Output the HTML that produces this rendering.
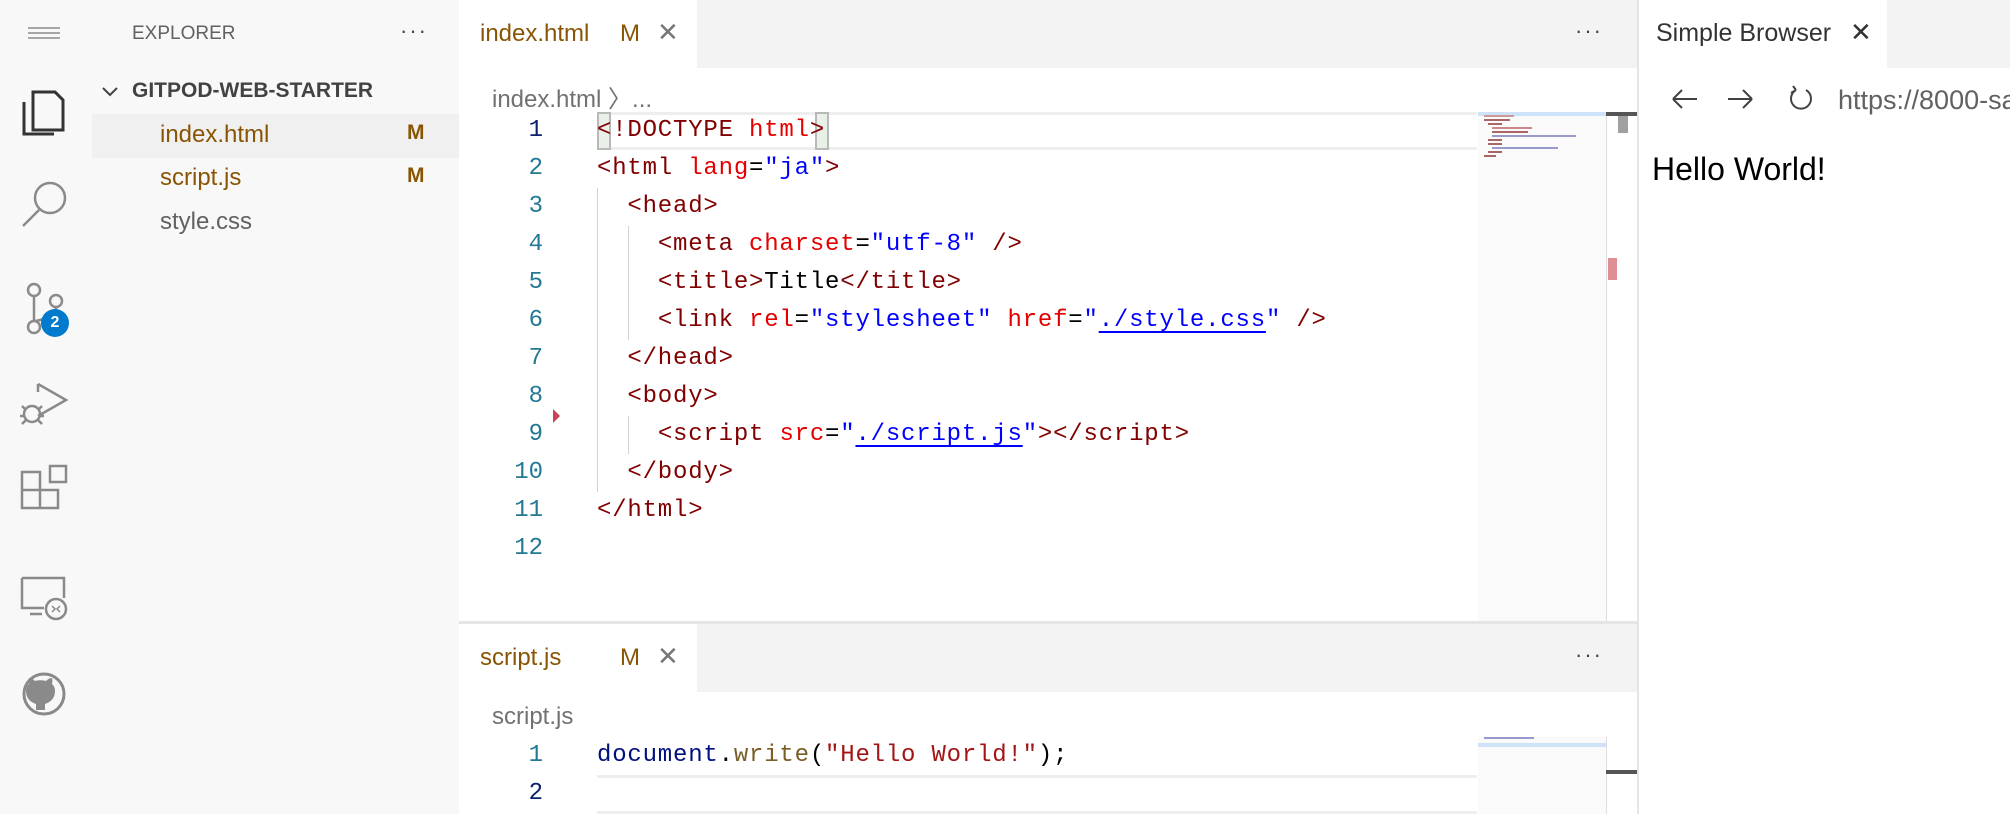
<!DOCTYPE html>
<html><head><meta charset="utf-8"><style>
*{margin:0;padding:0;box-sizing:border-box}
body{width:2010px;height:814px;overflow:hidden;background:#fff;font-family:"Liberation Sans",sans-serif;position:relative}
.a{position:absolute}
.code{font-family:"Liberation Mono",monospace;font-size:24px;letter-spacing:0.8px;white-space:pre;line-height:38px}
.ln{position:absolute;width:60px;text-align:right;left:483px;color:#237893;font-family:"Liberation Mono",monospace;font-size:24px;line-height:38px}
.t{color:#800000}.at{color:#e50000}.v{color:#0000ff}.u{text-decoration:underline;text-decoration-thickness:2px;text-underline-offset:5px}
.ui{font-size:24px;color:#616161}
.g{position:absolute;width:1px;background:#d3d3d3}
</style></head><body>
<!-- activity bar -->
<div class="a" style="left:0;top:0;width:92px;height:814px;background:#f8f8f8"></div>
<svg class="a" style="left:0;top:0" width="92" height="814" fill="none" stroke="#8a8a8a" stroke-width="2.5">
<path d="M28 28h32M28 33h32M28 38h32" stroke-width="1.5"/>
<path d="M33 92h22l8 8v30H33z M24 102v32h30" stroke="#333" stroke-width="3"/>
<circle cx="50" cy="198" r="15"/><path d="M39 210L23 226"/>
<circle cx="34" cy="290" r="6"/><circle cx="56" cy="301" r="6"/><circle cx="34" cy="327" r="6"/><path d="M34 296v25M56 307c0 10-12 12-20 14"/>
<path d="M38 384l28 16-28 16 M38 384v8"/><circle cx="32" cy="414" r="8"/><path d="M22 406l4 4M42 406l-4 4M20 416h4M40 416h4M22 424l4-4M42 424l-4-4"/>
<path d="M22 490h18v-18H22zM22 490v18h18v-18M40 508h18v-18H40M50 466h16v16H50z"/>
<path d="M22 578h42v20M22 578v30h22M30 614h12"/><circle cx="56" cy="609" r="10"/><path d="M52 606l3 3-3 3M60 606l-3 3 3 3" stroke-width="1.5"/>
<circle cx="44" cy="694" r="20" stroke-width="3"/>
<path d="M36 710v-6c-6-2-10-6-10-13 0-3 1-5 3-7-1-3 0-6 0-6 3 0 5 2 6 3 3-1 8-1 11 0 1-1 3-3 6-3 0 0 1 3 0 6 2 2 3 4 3 7 0 7-4 11-10 13v6" fill="#8a8a8a" stroke="none"/>
</svg>
<div class="a" style="left:41px;top:309px;width:28px;height:28px;border-radius:14px;background:#007acc;color:#fff;font-size:16px;font-weight:bold;text-align:center;line-height:28px">2</div>
<!-- sidebar -->
<div class="a" style="left:92px;top:0;width:367px;height:814px;background:#f8f8f8"></div>
<div class="a ui" style="left:132px;top:23px;font-size:19px">EXPLORER</div>
<div class="a" style="left:400px;top:18px;font-size:22px;color:#424242;letter-spacing:2px">···</div>
<svg class="a" style="left:100px;top:84px" width="20" height="16"><path d="M3 4l7 7 7-7" stroke="#424242" stroke-width="2" fill="none"/></svg>
<div class="a" style="left:132px;top:79px;font-size:21px;font-weight:bold;color:#424242">GITPOD-WEB-STARTER</div>
<div class="a" style="left:92px;top:114px;width:367px;height:44px;background:#f0f0f0"></div>
<div class="a ui" style="left:160px;top:121px;color:#895503">index.html</div>
<div class="a ui" style="left:407px;top:121px;color:#895503;font-weight:bold;font-size:21px">M</div>
<div class="a ui" style="left:160px;top:164px;color:#895503">script.js</div>
<div class="a ui" style="left:407px;top:164px;color:#895503;font-weight:bold;font-size:21px">M</div>
<div class="a ui" style="left:160px;top:208px;color:#616161">style.css</div>
<!-- top editor tabs -->
<div class="a" style="left:459px;top:0;width:1178px;height:68px;background:#f3f3f3"></div>
<div class="a" style="left:459px;top:0;width:238px;height:68px;background:#fff"></div>
<div class="a ui" style="left:480px;top:20px;color:#895503">index.html</div>
<div class="a ui" style="left:620px;top:20px;color:#895503">M</div>
<div class="a ui" style="left:657px;top:17px;color:#777;font-size:26px">✕</div>
<div class="a" style="left:1575px;top:18px;font-size:22px;color:#424242;letter-spacing:2px">···</div>
<div class="a ui" style="left:492px;top:79px;color:#717171">index.html 〉...</div>
<!-- top code -->
<div class="a" style="left:597px;top:112px;width:880px;height:38px;border-top:3px solid #eee;border-bottom:3px solid #eee"></div>
<div class="a" style="left:597px;top:112px;width:14px;height:38px;border:2px solid #b9b9b9;background:#e8f0e8"></div>
<div class="a" style="left:815px;top:112px;width:14px;height:38px;border:2px solid #b9b9b9;background:#e8f0e8"></div>
<div class="g" style="left:597px;top:188px;height:304px"></div>
<div class="g" style="left:628px;top:226px;height:114px"></div>
<div class="g" style="left:628px;top:416px;height:38px"></div>
<svg class="a" style="left:552px;top:408px" width="10" height="16"><path d="M1 1l7 7-7 7z" fill="#c94452"/></svg>
<div class="ln" style="top:112px;color:#0b216f">1</div>
<div class="ln" style="top:150px">2</div><div class="ln" style="top:188px">3</div><div class="ln" style="top:226px">4</div><div class="ln" style="top:264px">5</div><div class="ln" style="top:302px">6</div><div class="ln" style="top:340px">7</div><div class="ln" style="top:378px">8</div><div class="ln" style="top:416px">9</div><div class="ln" style="top:454px">10</div><div class="ln" style="top:492px">11</div><div class="ln" style="top:530px">12</div>
<div class="a code" style="left:597px;top:112px"><span class="t">&lt;!DOCTYPE <span class="at">html</span>&gt;</span>
<span class="t">&lt;html <span class="at">lang</span></span>=<span class="v">"ja"</span><span class="t">&gt;</span>
  <span class="t">&lt;head&gt;</span>
    <span class="t">&lt;meta <span class="at">charset</span></span>=<span class="v">"utf-8"</span> <span class="t">/&gt;</span>
    <span class="t">&lt;title&gt;</span>Title<span class="t">&lt;/title&gt;</span>
    <span class="t">&lt;link <span class="at">rel</span></span>=<span class="v">"stylesheet"</span> <span class="at">href</span>=<span class="v">"<span class="u">./style.css</span>"</span> <span class="t">/&gt;</span>
  <span class="t">&lt;/head&gt;</span>
  <span class="t">&lt;body&gt;</span>
    <span class="t">&lt;script <span class="at">src</span></span>=<span class="v">"<span class="u">./script.js</span>"</span><span class="t">&gt;&lt;/script&gt;</span>
  <span class="t">&lt;/body&gt;</span>
<span class="t">&lt;/html&gt;</span></div>
<!-- minimap + scrollbar top -->
<div class="a" style="left:1478px;top:112px;width:128px;height:510px;background:#fafafa"></div>
<div class="a" style="left:1478px;top:112px;width:128px;height:4px;background:#cfe3f8"></div>
<svg class="a" style="left:1484px;top:114px" width="120" height="44">
<g stroke-width="2"><path d="M0 2h30" stroke="#c99"/><path d="M0 6h26" stroke="#a66"/><path d="M4 10h14" stroke="#a66"/><path d="M8 14h40" stroke="#c88"/><path d="M8 18h36" stroke="#a66"/><path d="M8 22h84" stroke="#99c"/><path d="M4 26h14" stroke="#a66"/><path d="M4 30h14" stroke="#a66"/><path d="M8 34h66" stroke="#99c"/><path d="M4 38h14" stroke="#a66"/><path d="M0 42h12" stroke="#a66"/></g></svg>
<div class="a" style="left:1606px;top:112px;width:1px;height:510px;background:#ddd"></div>
<div class="a" style="left:1606px;top:112px;width:31px;height:4px;background:#555"></div>
<div class="a" style="left:1618px;top:116px;width:10px;height:17px;background:#a0a0a0"></div>
<div class="a" style="left:1608px;top:258px;width:9px;height:22px;background:#de8f94"></div>
<!-- split -->
<div class="a" style="left:459px;top:621px;width:1178px;height:3px;background:#e5e5e5"></div>
<div class="a" style="left:459px;top:624px;width:1178px;height:68px;background:#f3f3f3"></div>
<div class="a" style="left:459px;top:624px;width:238px;height:68px;background:#fff"></div>
<div class="a ui" style="left:480px;top:644px;color:#895503">script.js</div>
<div class="a ui" style="left:620px;top:644px;color:#895503">M</div>
<div class="a ui" style="left:657px;top:641px;color:#777;font-size:26px">✕</div>
<div class="a" style="left:1575px;top:642px;font-size:22px;color:#424242;letter-spacing:2px">···</div>
<div class="a ui" style="left:492px;top:703px;color:#717171">script.js</div>
<div class="ln" style="top:737px;color:#237893">1</div>
<div class="ln" style="top:775px;color:#0b216f">2</div>
<div class="a code" style="left:597px;top:737px"><span style="color:#001080">document</span>.<span style="color:#795e26">write</span>(<span style="color:#a31515">"Hello World!"</span>);</div>
<div class="a" style="left:597px;top:775px;width:880px;height:39px;border-top:3px solid #eee;border-bottom:3px solid #eee"></div>
<div class="a" style="left:1478px;top:737px;width:128px;height:77px;background:#fafafa"></div>
<div class="a" style="left:1478px;top:743px;width:128px;height:4px;background:#cfe3f8"></div>
<div class="a" style="left:1484px;top:737px;width:50px;height:2px;background:#99c"></div>
<div class="a" style="left:1606px;top:737px;width:1px;height:77px;background:#ddd"></div>
<div class="a" style="left:1606px;top:770px;width:31px;height:4px;background:#555"></div>
<!-- browser -->
<div class="a" style="left:1637px;top:0;width:2px;height:814px;background:#e5e5e5"></div>
<div class="a" style="left:1639px;top:0;width:371px;height:68px;background:#f3f3f3"></div>
<div class="a" style="left:1639px;top:0;width:248px;height:68px;background:#fff"></div>
<div class="a" style="left:1656px;top:19px;font-size:25px;color:#333">Simple Browser</div>
<div class="a" style="left:1850px;top:17px;font-size:26px;color:#333">✕</div>
<svg class="a" style="left:1670px;top:84px" width="160" height="30" fill="none" stroke="#424242" stroke-width="2">
<path d="M3 15h24M3 15l9-9M3 15l9 9"/><path d="M58 15h24M82 15l-9-9M82 15l-9 9"/>
<path d="M126 6a10 10 0 1 0 10 0M126 6l-3 -4M126 6l-5 3" />
</svg>
<div class="a" style="left:1838px;top:85px;font-size:27px;color:#616161;white-space:nowrap">https://8000-sa</div>
<div class="a" style="left:1652px;top:151px;font-size:32px;color:#000">Hello World!</div>
</body></html>
